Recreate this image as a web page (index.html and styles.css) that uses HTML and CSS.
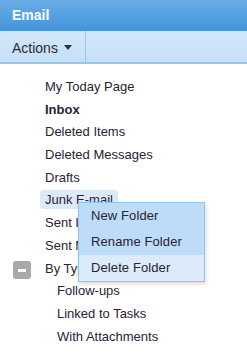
FILE: index.html
```html
<!DOCTYPE html>
<html lang="en">
<head>
  <meta charset="UTF-8">
  <title>Email</title>
  <link rel="stylesheet" href="styles.css">
</head>
<body>
  <div class="panel">
    <div class="header">Email</div>
    <div class="toolbar">
      <div class="actions">Actions <span class="caret"></span></div>
    </div>

    <ul class="tree">
      <li class="item">My Today Page</li>
      <li class="item bold">Inbox</li>
      <li class="item">Deleted Items</li>
      <li class="item">Deleted Messages</li>
      <li class="item">Drafts</li>
      <li class="item"><span class="selected">Junk E-mail</span></li>
      <li class="item">Sent Items</li>
      <li class="item">Sent Messages</li>
      <li class="item group">
        <span class="toggle"></span>
        By Type
      </li>
      <li class="item child">Follow-ups</li>
      <li class="item child">Linked to Tasks</li>
      <li class="item child">With Attachments</li>
    </ul>

    <!-- context menu -->
    <ul class="menu">
      <li class="menu-item">New Folder</li>
      <li class="menu-item">Rename Folder</li>
      <li class="menu-item hover">Delete Folder</li>
    </ul>
  </div>
</body>
</html>
```

FILE: styles.css
```css
/* Base */
* { box-sizing: border-box; margin: 0; padding: 0; }
body {
  font-family: "Liberation Sans", Arial, sans-serif;
  font-size: 13px;
  color: #2b2233;
  background: #fff;
}
.panel {
  position: relative;
  width: 247px;
  height: 353px;
  overflow: hidden;
}

/* Header */
.header {
  height: 31px;
  padding: 7px 12px 0;
  background: linear-gradient(#69aee6, #4393dc);
  color: #fff;
  font-weight: bold;
  font-size: 14px;
}

/* Toolbar */
.toolbar {
  height: 33px;
  display: flex;
  background: linear-gradient(#d3e7fa, #c6e0f8);
  border-bottom: 2px solid #93c6f1;
}
.actions {
  width: 86px;
  padding: 9px 0 0 12px;
  border-right: 1px solid #93c6f1;
  font-size: 14px;
  color: #2d2a33;
}
.caret {
  display: inline-block;
  margin-left: 2px;
  vertical-align: 3px;
  border-left: 4px solid transparent;
  border-right: 4px solid transparent;
  border-top: 5px solid #333;
}

/* Tree */
.tree {
  list-style: none;
  padding-top: 12px;
}
.item {
  height: 22.7px;
  line-height: 22.7px;
  padding-left: 45px;
  position: relative;
}
.bold { font-weight: bold; }
.child { padding-left: 57px; }
.selected {
  display: inline-block;
  margin-left: -5px;
  padding: 0 5px;
  line-height: 19px;
  background: #dbeaf9;
  border-radius: 3px;
}
.toggle {
  position: absolute;
  left: 13px;
  top: 3px;
  width: 18px;
  height: 18px;
  background: #a9a9a9;
  border-radius: 3px;
}
.toggle::after {
  content: "";
  position: absolute;
  left: 5px;
  top: 8px;
  width: 8px;
  height: 3px;
  background: #fff;
}

/* Context menu */
.menu {
  position: absolute;
  left: 78px;
  top: 202px;
  width: 127px;
  list-style: none;
  background: #bedcf8;
  border: 1px solid #8ec4f2;
  box-shadow: 1px 2px 4px rgba(0,0,0,0.15);
}
.menu-item {
  height: 26px;
  line-height: 26px;
  padding-left: 12px;
  letter-spacing: 0.1px;
}
.menu-item.hover { background: #dcebfa; }
```
